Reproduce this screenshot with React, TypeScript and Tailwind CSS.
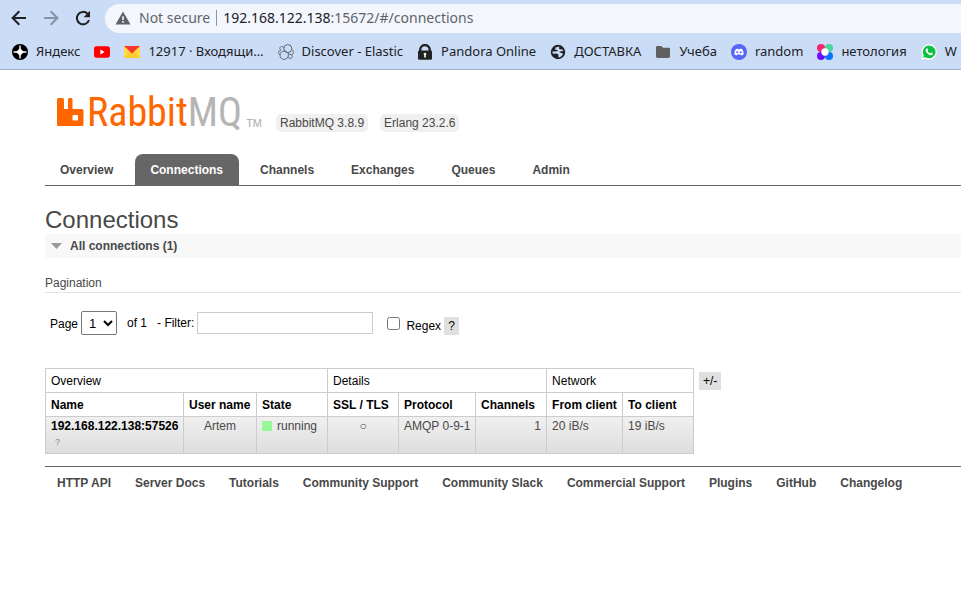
import React from "react";

type Bookmark = { label?: string; icon: React.ReactNode; name: string };

const iconClass = "h-4 w-4 shrink-0";

const bookmarks: Bookmark[] = [
  {
    name: "Яндекс",
    label: "Яндекс",
    icon: (
      <svg viewBox="0 0 16 16" className={iconClass}>
        <circle cx="8" cy="8" r="8" fill="#000" />
        <path d="M8 1.5C8.2 6 10 7.8 14.5 8 10 8.2 8.2 10 8 14.5 7.8 10 6 8.2 1.5 8 6 7.8 7.8 6 8 1.5Z" fill="#fff" stroke="#fff" strokeWidth="0.8" />
      </svg>
    ),
  },
  {
    name: "YouTube",
    icon: (
      <svg viewBox="0 0 16 16" className={iconClass}>
        <rect x="0" y="2.3" width="16" height="11.4" rx="2.6" fill="#f00" />
        <path d="M6.4 5.6v4.8L10.6 8Z" fill="#fff" />
      </svg>
    ),
  },
  {
    name: "Mail",
    label: "12917 · Входящи…",
    icon: (
      <svg viewBox="0 0 16 16" className={iconClass}>
        <rect y="2" width="16" height="12" fill="#ffc931" />
        <path d="M0 14V2l6 5Z M16 14V2l-6 5Z" fill="#ffda45" />
        <path d="M0 2h16L8 9.5Z" fill="#f8362c" />
      </svg>
    ),
  },
  {
    name: "Elastic",
    label: "Discover - Elastic",
    icon: (
      <svg viewBox="0 0 16 16" className={iconClass} fill="none" stroke="#5f6673" strokeWidth="1">
        <circle cx="9.8" cy="4.6" r="4" />
        <circle cx="6.2" cy="11.2" r="4.2" />
        <path d="M5.800 4.200A2 2 0 1 0 2.800 6.200C-.1 6.800-.1 10.200 2.100 10.700M13.600 5.600c2.500.9 2.400 4.700-.2 5.300M10.200 12.700a2 2 0 1 0 3.200-1.800L10 9.600" />
      </svg>
    ),
  },
  {
    name: "Pandora",
    label: "Pandora Online",
    icon: (
      <svg viewBox="0 0 16 16" className={iconClass}>
        <path d="M3.2 7.500V5.900a4.800 4.800 0 0 1 9.600 0v1.600" fill="none" stroke="#222" strokeWidth="2.400" />
        <rect x="1" y="6.400" width="14" height="9.400" rx="1.400" fill="#222" />
        <path d="M8 8.800a1.400 1.400 0 0 1 .8 2.500v2.100H7.200v-2.100A1.400 1.400 0 0 1 8 8.800Z" fill="#fff" />
      </svg>
    ),
  },
  {
    name: "ДОСТАВКА",
    label: "ДОСТАВКА",
    icon: (
      <svg viewBox="0 0 16 16" className={iconClass}>
        <circle cx="8" cy="8" r="7.200" fill="#202124" />
        <path d="M9.600 2.500 5.600 3.500 5 5.600 7.600 6 7.600 7.200 2.400 7.400 2.800 9.800 6 9.400 8.400 10.200 8.400 13.500 10.400 13.100 13 10.500 12 9 9.800 8.600 9.400 7.400 13.200 7 12.600 5.400 9.600 5.200 8.900 4.100Z" fill="#cbdcf6" />
      </svg>
    ),
  },
  {
    name: "Учеба",
    label: "Учеба",
    icon: (
      <svg viewBox="0 0 16 16" className={iconClass}>
        <path d="M2.400 2h4l1.600 1.700h5.600A1.400 1.400 0 0 1 15 5.100v7.500a1.400 1.400 0 0 1-1.400 1.400H2.400A1.400 1.400 0 0 1 1 12.600V3.400A1.400 1.400 0 0 1 2.400 2Z" fill="#606060" />
      </svg>
    ),
  },
  {
    name: "Discord",
    label: "random",
    icon: (
      <svg viewBox="0 0 16 16" className={iconClass}>
        <circle cx="8" cy="8" r="8" fill="#5865f2" />
        <path d="M5 4.900 6.500 4.500l.4.700h2.200l.4-.7 1.500.4c1.300 1.800 1.800 3.700 1.600 5.600-.7.5-1.400.8-2.200 1l-.7-1H6.300l-.7 1c-.8-.2-1.500-.5-2.200-1-.2-1.900.3-3.800 1.600-5.600Z" fill="#fff" />
        <circle cx="6.300" cy="8.300" r="1.050" fill="#5865f2" />
        <circle cx="9.700" cy="8.300" r="1.050" fill="#5865f2" />
      </svg>
    ),
  },
  {
    name: "нетология",
    label: "нетология",
    icon: (
      <svg viewBox="0 0 16 16" className={iconClass}>
        <circle cx="4" cy="4" r="4" fill="#f5256e" />
        <circle cx="12" cy="4" r="4" fill="#49d6a0" />
        <circle cx="4" cy="12" r="4" fill="#6a0dff" />
        <circle cx="12" cy="12" r="4" fill="#0a74ff" />
        <circle cx="8" cy="8" r="3.700" fill="#fff" />
      </svg>
    ),
  },
  {
    name: "WhatsApp",
    label: "W",
    icon: (
      <svg viewBox="0 0 16 16" className={iconClass}>
        <path d="M8.200.200a7.700 7.700 0 1 1-3.700 14.500L.300 15.800l1.200-4.100A7.700 7.700 0 0 1 8.200.200Z" fill="#fff" />
        <path d="M8.200 1.500a6.400 6.400 0 1 1-3.500 11.800l-2.500.700.700-2.500A6.400 6.400 0 0 1 8.200 1.500Z" fill="#0cc243" />
        <path d="M5.700 4.400c.600-.3.900.1 1.300 1.200.2.600-.2.900-.5 1.300.6 1.200 1.500 2 2.700 2.500.5-.4.700-1 1.200-.8l1.400.8c.1 1-.8 1.800-2 1.800-2.300-.2-5-2.600-5.200-4.900 0-.8.500-1.500 1.100-1.900Z" fill="#fff" />
      </svg>
    ),
  },
];

function BrowserChrome() {
  return (
    <header className="overflow-hidden border-b border-[#a3b3cf] bg-[#cbdcf6] font-['Noto_Sans',sans-serif] text-[#202124]">
      <div className="flex h-9 items-center pl-[11px]">
        <nav className="flex gap-4" aria-label="History">
          <button aria-label="Back">
            <svg viewBox="0 0 16 16" className={iconClass} fill="none" stroke="#202124" strokeWidth="2">
              <path d="M15 8H2M8.300 1.300 1.600 8l6.700 6.700" />
            </svg>
          </button>
          <button aria-label="Forward">
            <svg viewBox="0 0 16 16" className={iconClass} fill="none" stroke="#8692a6" strokeWidth="2">
              <path d="M1 8h13M7.700 1.300 14.400 8l-6.700 6.700" />
            </svg>
          </button>
          <button aria-label="Reload">
            <svg viewBox="0 0 16 16" className={iconClass}>
              <path d="M14 10a6.200 6.200 0 1 1-1.400-6.200" fill="none" stroke="#202124" strokeWidth="2" />
              <path d="M15 .800v6.400H8.600Z" fill="#202124" />
            </svg>
          </button>
        </nav>
        <div className="ml-[14px] flex h-[29px] min-w-0 flex-1 items-center rounded-l-full bg-[#f3f7fd] pl-[10px] text-sm">
          <svg viewBox="0 0 16 16" className={iconClass}>
            <path d="M8 1.500 15.500 14.500H.500Z" fill="#5f6368" />
            <path d="M7.200 6.200h1.600v3.900H7.200Zm0 4.900h1.600v1.600H7.200Z" fill="#f3f7fd" />
          </svg>
          <span className="ml-2 whitespace-nowrap text-[#5f6368]">Not secure</span>
          <span className="mx-[6px] h-4 w-px bg-[#8f959e]" />
          <span className="whitespace-nowrap text-[#5f6368]">
            <span className="text-[#202124]">192.168.122.138</span>:15672/#/connections
          </span>
        </div>
      </div>
      <nav className="flex h-[33px] gap-[14px] pb-[2px] pl-3" aria-label="Bookmarks">
        {bookmarks.map((b) => (
          <a key={b.name} href="#" aria-label={b.name} className="flex shrink-0 items-center gap-2 whitespace-nowrap text-[13px]">
            {b.icon}
            {b.label}
          </a>
        ))}
      </nav>
    </header>
  );
}

const tabs = ["Overview", "Connections", "Channels", "Exchanges", "Queues", "Admin"];
const footerLinks = [
  "HTTP API",
  "Server Docs",
  "Tutorials",
  "Community Support",
  "Community Slack",
  "Commercial Support",
  "Plugins",
  "GitHub",
  "Changelog",
];

const tab = "pt-[2px] pr-4 pl-[15px] leading-[29px]";
const pill = "rounded-[5px] bg-[#f0f0f0] px-1 leading-[18px]";
const headCell = "border border-[#ccc] px-[5px]";
const bodyCell = "border border-[#ccc] px-[5px] pt-px";

function ConnectionsTable() {
  return (
    <table className="w-[649px] table-fixed border-collapse text-left leading-4">
      <colgroup>
        <col className="w-[138px]" />
        <col className="w-[73px]" />
        <col className="w-[71px]" />
        <col className="w-[71px]" />
        <col className="w-[77px]" />
        <col className="w-[71px]" />
        <col className="w-[76px]" />
        <col className="w-[71px]" />
      </colgroup>
      <thead className="text-black">
        <tr className="h-6">
          <th colSpan={3} className={`${headCell} font-normal`}>Overview</th>
          <th colSpan={3} className={`${headCell} font-normal`}>Details</th>
          <th colSpan={2} className={`${headCell} font-normal`}>Network</th>
        </tr>
        <tr className="h-6 whitespace-nowrap">
          {["Name", "User name", "State", "SSL / TLS", "Protocol", "Channels", "From client", "To client"].map((h) => (
            <th key={h} className={headCell}>
              <a href="#">{h}</a>
            </th>
          ))}
        </tr>
      </thead>
      <tbody>
        <tr className="h-[37px] bg-linear-to-b from-[#f0f0f0] to-[#dddddd] align-top whitespace-nowrap">
          <td className={bodyCell}>
            <a href="#" className="block font-bold text-black">192.168.122.138:57526</a>
            <sub className="block pl-1 text-[9px] leading-3 text-[#888]">?</sub>
          </td>
          <td className={`${bodyCell} text-center`}>Artem</td>
          <td className={bodyCell}>
            <span className="flex items-center gap-[5px]">
              <span className="h-[10px] w-[10px] bg-[#98f898]" />
              running
            </span>
          </td>
          <td className={`${bodyCell} text-center`}>○</td>
          <td className={bodyCell}>AMQP 0-9-1</td>
          <td className={`${bodyCell} text-right`}>1</td>
          <td className={bodyCell}>20 iB/s</td>
          <td className={bodyCell}>19 iB/s</td>
        </tr>
      </tbody>
    </table>
  );
}

export default function App() {
  return (
    <div className="min-h-screen overflow-x-hidden bg-white font-['Liberation_Sans',Arial,sans-serif] text-xs text-[#484848]">
      <BrowserChrome />
      <div className="pl-[45px]">
        <div className="flex items-end gap-3 pt-6">
          <a href="#" aria-label="RabbitMQ" className="flex h-[38px] items-start pr-[2px] pl-3">
            <svg viewBox="0 0 27 28" className="mt-1 h-7 w-[27px] shrink-0">
              <path
                fillRule="evenodd"
                fill="#f60"
                d="M1.500 0h4A1.500 1.500 0 0 1 7 1.500V11h4V1.500A1.500 1.500 0 0 1 12.500 0h1.500A1.500 1.500 0 0 1 15.500 1.500V11h9.500a1.500 1.500 0 0 1 1.500 1.500v14A1.500 1.500 0 0 1 25 28H1.500A1.500 1.500 0 0 1 0 26.500v-25A1.500 1.500 0 0 1 1.500 0ZM16.500 17a1 1 0 0 0-1 1v3.500a1 1 0 0 0 1 1h3.500a1 1 0 0 0 1-1V18a1 1 0 0 0-1-1Z"
              />
            </svg>
            <span className="pl-[3px] font-['Roboto_Condensed',Roboto,sans-serif] text-[40px] leading-[38px] font-normal text-[#f60]">
              Rabbit<span className="text-[#b5b5b5]">MQ</span>
            </span>
            <span className="self-end pb-[3px] pl-1 text-[11px] leading-3 text-[#aaa]">TM</span>
          </a>
          <span className={pill}>RabbitMQ 3.8.9</span>
          <span className={pill}>Erlang 23.2.6</span>
        </div>

        <nav className="mt-[22px] flex gap-[6px] border-b border-[#666] font-bold" aria-label="Sections">
          {tabs.map((t) => (
            <a
              key={t}
              href="#"
              className={t === "Connections" ? `${tab} rounded-t-[8px] bg-[#666] text-white` : tab}
            >
              {t}
            </a>
          ))}
        </nav>

        <main>
          <h1 className="mt-5 text-2xl leading-7">Connections</h1>
          <h2 className="bg-[#f8f8f8]">
            <button className="flex h-6 w-full items-center gap-2 pl-[6px] font-bold">
              <svg viewBox="0 0 11 6" className="h-[6px] w-[11px]">
                <path d="M0 0h11L5.500 6Z" fill="#999" />
              </svg>
              All connections (1)
            </button>
          </h2>
          <h3 className="mt-4 border-b border-[#e4e4e4] leading-[18px]">Pagination</h3>

          <form className="mt-[18px] flex h-6 items-center pl-[5px] text-black">
            <label htmlFor="page" className="pt-[2px]">Page</label>
            <select id="page" className="ml-[3px] h-6 w-9 appearance-auto rounded-[2px] border border-[#767676] bg-white pl-[3px] text-[13px]">
              <option>1</option>
            </select>
            <span className="ml-[10px]">of 1</span>
            <label htmlFor="filter" className="ml-[10px]">- Filter:</label>
            <input id="filter" type="text" className="ml-[3px] h-[22px] w-44 border border-[#ccc] px-1" />
            <input id="regex" type="checkbox" className="ml-[14px] h-[13px] w-[13px]" />
            <label htmlFor="regex" className="ml-[6px] pt-[6px]">Regex</label>
            <button type="button" className="mt-[6px] ml-[3px] h-[18px] w-[15px] bg-[#e0e0e0]">?</button>
          </form>

          <div className="mt-[33px] flex items-start gap-[5px]">
            <ConnectionsTable />
            <button className="mt-1 h-[18px] w-[22px] bg-[#e0e0e0] text-black">+/-</button>
          </div>
        </main>

        <footer className="mt-3 flex gap-6 border-t border-[#666] pt-2 pl-3 leading-4 font-bold whitespace-nowrap">
          {footerLinks.map((l) => (
            <a key={l} href="#">{l}</a>
          ))}
        </footer>
      </div>
    </div>
  );
}
